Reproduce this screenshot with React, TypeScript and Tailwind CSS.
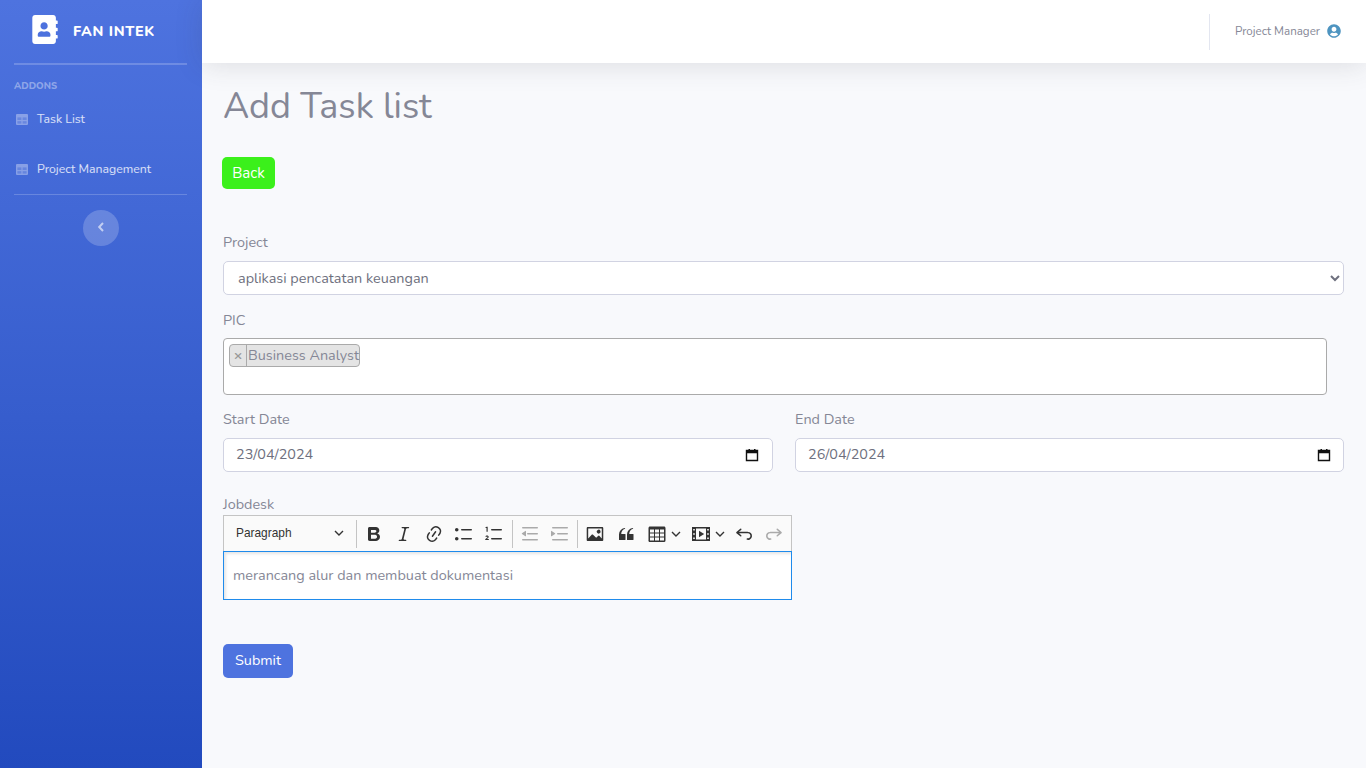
import React from "react";
import { FaAddressBook, FaUserCircle } from "react-icons/fa";

const font = { fontFamily: "Nunito, 'Noto Sans', sans-serif" };

function Ico({ d, className = "", color = "#333", flip = false }: { d: string; className?: string; color?: string; flip?: boolean }) {
  return (
    <svg viewBox="0 0 20 20" className={"h-5 w-5 shrink-0 " + className}>
      <path d={d} fill={color} fillRule="evenodd" transform={flip ? "matrix(-1 0 0 1 20 0)" : undefined} />
    </svg>
  );
}

function Chevron({ className = "" }: { className?: string }) {
  return (
    <svg viewBox="0 0 10 10" className={"h-[10px] w-[10px] shrink-0 " + className} fill="none">
      <path d="M1 3l4 4 4-4" stroke="#333" strokeWidth="1.4" />
    </svg>
  );
}

function Sep() {
  return <span className="mx-[4px] h-[28px] w-px shrink-0 bg-[#c4c4c4]" />;
}

const BOLD = "M10.187 17H5.773c-.637 0-1.092-.138-1.364-.415-.273-.277-.409-.718-.409-1.323V4.738c0-.617.14-1.062.419-1.332.279-.27.73-.406 1.354-.406h4.68c.69 0 1.288.041 1.793.124.506.083.96.242 1.36.478.341.197.644.447.906.75a3.262 3.262 0 0 1 .808 2.162c0 1.401-.722 2.426-2.167 3.075C15.05 10.175 16 11.315 16 13.01a3.756 3.756 0 0 1-2.296 3.504 6.1 6.1 0 0 1-1.517.377c-.571.073-1.238.11-2 .11zm-.217-6.217H7v4.087h3.069c1.977 0 2.965-.69 2.965-2.072 0-.707-.256-1.22-.768-1.537-.512-.319-1.277-.478-2.296-.478zM7 5.13v3.619h2.606c.729 0 1.292-.067 1.69-.2a1.6 1.6 0 0 0 .91-.765c.11-.186.165-.394.165-.625 0-.493-.18-.82-.54-.982-.36-.162-.91-.243-1.651-.243H7z";
const ITALIC = "m9.586 14.633.021.004c-.036.335.095.655.393.962.082.083.173.15.274.201h1.474a.6.6 0 1 1 0 1.2H5.304a.6.6 0 0 1 0-1.2h1.15c.474-.07.809-.182 1.005-.334.157-.122.291-.32.404-.597l2.416-9.55a1.053 1.053 0 0 0-.281-.823 1.12 1.12 0 0 0-.442-.296H8.15a.6.6 0 0 1 0-1.2h6.443a.6.6 0 1 1 0 1.2h-1.195c-.376.056-.65.155-.823.296-.215.175-.423.439-.623.79l-2.366 9.347z";
const LINK = "m11.077 15 .991-1.416a.75.75 0 1 1 1.229.86l-1.148 1.64a.748.748 0 0 1-.217.206 5.251 5.251 0 0 1-8.503-5.955.741.741 0 0 1 .12-.274l1.147-1.639a.75.75 0 1 1 1.228.86L4.933 10.7l.006.003a3.75 3.75 0 0 0 6.132 4.294l.006.004zm5.494-5.335a.748.748 0 0 1-.12.274l-1.147 1.639a.75.75 0 1 1-1.228-.86l.86-1.23a3.75 3.75 0 0 0-6.144-4.301l-.86 1.229a.75.75 0 0 1-1.229-.86l1.148-1.64a.748.748 0 0 1 .217-.206 5.251 5.251 0 0 1 8.503 5.955zm-4.563-2.532a.75.75 0 0 1 .184 1.045l-3.155 4.505a.75.75 0 1 1-1.229-.86l3.155-4.506a.75.75 0 0 1 1.045-.184z";
const BULLET = "M7 5.75c0 .414.336.75.75.75h9.5a.75.75 0 1 0 0-1.5h-9.5a.75.75 0 0 0-.75.75zm-6 0C1 4.784 1.777 4 2.75 4c.966 0 1.75.777 1.75 1.75 0 .966-.777 1.75-1.75 1.75C1.784 7.5 1 6.723 1 5.75zm6 9c0 .414.336.75.75.75h9.5a.75.75 0 1 0 0-1.5h-9.5a.75.75 0 0 0-.75.75zm-6 0c0-.966.777-1.75 1.75-1.75.966 0 1.75.777 1.75 1.75 0 .966-.777 1.75-1.75 1.75-.966 0-1.75-.777-1.75-1.75z";
const NUMBERED = "M7 5.75c0 .414.336.75.75.75h9.5a.75.75 0 1 0 0-1.5h-9.5a.75.75 0 0 0-.75.75zm0 9c0 .414.336.75.75.75h9.5a.75.75 0 1 0 0-1.5h-9.5a.75.75 0 0 0-.75.75zM2.6 2.8h1.1v5H2.500V4H1.500V3.300zM1.300 12.600c.2-.8.900-1.200 1.700-1.200 1 0 1.700.6 1.700 1.400 0 .7-.4 1.200-1.100 1.700l-.8.6h2v1H1.200v-.9l1.700-1.400c.4-.3.6-.6.6-.9 0-.3-.2-.5-.5-.5-.4 0-.6.2-.7.6z";
const INDENT = "M2 3.75c0 .414.336.75.75.75h14.500a.75.75 0 1 0 0-1.500H2.750a.75.75 0 0 0-.75.75zm5 6c0 .414.336.75.75.75h9.500a.75.75 0 1 0 0-1.500h-9.500a.75.75 0 0 0-.75.75zM2.750 16.500h14.500a.75.75 0 1 0 0-1.500H2.750a.75.75 0 1 0 0 1.500zM1.632 6.950 5.020 9.358a.4.4 0 0 1-.013.661l-3.390 2.207A.4.4 0 0 1 1 11.892V7.275a.4.4 0 0 1 .632-.326z";
const OUTDENT = "M2 3.750c0 .414.336.75.75.75h14.500a.75.75 0 1 0 0-1.500H2.750a.75.75 0 0 0-.75.75zm5 6c0 .414.336.75.75.75h9.500a.75.75 0 1 0 0-1.500h-9.500a.75.75 0 0 0-.75.75zM2.750 16.500h14.500a.75.75 0 1 0 0-1.500H2.750a.75.75 0 1 0 0 1.500zM5.370 6.950 1.980 9.358a.4.4 0 0 0 .013.661l3.390 2.207A.4.4 0 0 0 6 11.892V7.275a.4.4 0 0 0-.630-.326z";
const IMAGE = "M6.910 10.540c.26-.23.64-.21.88.03l3.360 3.140 2.230-2.060a.64.64 0 0 1 .87 0l2.520 2.970V4.500H3.200v10.120l3.710-4.080zm10.270-7.510c.6 0 1.090.47 1.090 1.050v11.840c0 .59-.49 1.060-1.090 1.060H2.790c-.6 0-1.090-.47-1.090-1.060V4.080c0-.58.49-1.050 1.100-1.050h14.380zm-5.220 5.560a1.960 1.960 0 1 1 3.400-1.960 1.960 1.960 0 0 1-3.400 1.960z";
const QUOTE = "M3 10.423a6.500 6.500 0 0 1 6.056-6.408l.038.67C6.448 5.423 5.354 7.663 5.220 10H9c.552 0 .5.432.5.986v4.511c0 .554-.448.503-1 .503h-5c-.552 0-.5-.449-.5-1.003v-4.574zm8 0a6.500 6.500 0 0 1 6.056-6.408l.038.67c-2.646.739-3.740 2.979-3.873 5.315H17c.552 0 .5.432.5.986v4.511c0 .554-.448.503-1 .503h-5c-.552 0-.5-.449-.5-1.003v-4.574z";
const TABLE = "M3 5.500v3h4v-3H3zm0 4v3h4v-3H3zm0 4v3h4v-3H3zm5 3h4v-3H8v3zm5 0h4v-3h-4v3zm4-4v-3h-4v3h4zm0-4v-3h-4v3h4zm1.500 8a1.500 1.500 0 0 1-1.500 1.500H3A1.500 1.500 0 0 1 1.500 16V4c0-.828.672-1.500 1.500-1.500h14c.828 0 1.500.672 1.500 1.500v12zM8 12.500h4v-3H8v3zM8 8.500h4v-3H8v3z";
const MEDIA = "M1 3h18v14H1zM5 4.500v11h10v-11zM2.200 5v1.600h1.600V5zM2.200 9.200v1.600h1.600V9.200zM2.200 13.400V15h1.600v-1.600zM16.200 5v1.600h1.600V5zM16.200 9.200v1.600h1.600V9.200zM16.200 13.400V15h1.600v-1.600zM8 6.800v6.400l5.200-3.200z";
const UNDO = "m5.042 9.367 2.189 1.837a.75.75 0 0 1-.965 1.149l-3.788-3.180a.747.747 0 0 1-.21-.284.75.75 0 0 1 .17-.945L6.230 4.762a.75.75 0 1 1 .964 1.150L4.863 7.866h8.917A.75.75 0 0 1 14 7.900a4 4 0 1 1-1.477 7.718l.344-1.489a2.500 2.500 0 1 0 1.094-4.780l.008-.020-.090.010-8.840-.020z";

function Toolbar() {
  return (
    <div className="flex h-[36px] items-center border border-b-0 border-[#c4c4c4] bg-[#fafafa]">
      <div className="ml-[2px] flex w-[126px] shrink-0 items-center justify-between pl-[10px] pr-[8px] text-[11.9px] text-[#333]" style={{ fontFamily: "'Liberation Sans', sans-serif" }}>
        <span className="mt-[1px]">Paragraph</span>
        <Chevron />
      </div>
      <Sep />
      <div className="flex shrink-0 items-center gap-[10px] pl-[3px] pr-[4px]">
        <Ico d={BOLD} />
        <Ico d={ITALIC} />
        <Ico d={LINK} />
        <Ico d={BULLET} />
        <Ico d={NUMBERED} />
      </div>
      <Sep />
      <div className="flex shrink-0 items-center gap-[10px] px-[3px]">
        <Ico d={OUTDENT} color="#aaa" />
        <Ico d={INDENT} color="#aaa" />
      </div>
      <Sep />
      <div className="flex shrink-0 items-center pl-[3px]">
        <Ico d={IMAGE} />
        <Ico d={QUOTE} className="ml-[11px]" />
        <Ico d={TABLE} className="ml-[11px]" />
        <Chevron className="ml-[4px]" />
        <Ico d={MEDIA} className="ml-[10px]" />
        <Chevron className="ml-[4px]" />
        <Ico d={UNDO} className="ml-[9px]" />
        <Ico d={UNDO} color="#aaa" flip className="ml-[10px]" />
      </div>
    </div>
  );
}

function GridIcon() {
  return (
    <svg viewBox="0 0 12 11" className="h-[11px] w-[12px] shrink-0">
      <path fillRule="evenodd" d="M1 0h10a1 1 0 0 1 1 1v9a1 1 0 0 1-1 1H1a1 1 0 0 1-1-1V1a1 1 0 0 1 1-1zM1.500 3.500v2.500h3.800V3.500zM6.700 3.500v2.500h3.800V3.500zM1.500 7.200v2.300h3.800V7.200zM6.700 7.200v2.300h3.800V7.200z" fill="#fff" fillOpacity="0.36" />
      <path d="M1.500 3.500h3.800v2.500H1.500zM6.700 3.500h3.800v2.500H6.700zM1.500 7.200h3.800v2.300H1.500zM6.700 7.200h3.800v2.300H6.700z" fill="#fff" fillOpacity="0.18" />
    </svg>
  );
}

function DateField({ value, pad }: { value: string; pad: string }) {
  return (
    <div className={"mt-[9px] flex h-[34px] items-center justify-between rounded-[5px] border border-[#d1d3e2] bg-white pl-[12px] text-[14.4px] text-[#6e707e] " + pad}>
      <span>{value}</span>
      <svg viewBox="0 0 14 14" className="h-[14px] w-[14px]" fill="none">
        <path d="M1.500 2.500h11v10h-11z" stroke="#111" strokeWidth="1.400" />
        <path d="M1 2.200h12v3H1zM3.500 1h1.500v2H3.500zM9 1h1.500v2H9z" fill="#111" />
      </svg>
    </div>
  );
}

export default function App() {
  return (
    <div className="flex h-screen overflow-hidden bg-[#f8f9fc] text-[#858796]" style={font}>
      <aside className="flex w-[202px] shrink-0 flex-col bg-gradient-to-b from-[#4e73df] to-[#224abe] pl-[14px] pr-[15px]">
        <div className="flex h-[63px] items-center pb-[4px] pl-[18px]">
          <FaAddressBook className="h-[29px] w-[26px] text-white" />
          <span className="ml-[15px] mt-[4px] text-[14.4px] font-extrabold tracking-[0.65px] text-white">FAN INTEK</span>
        </div>
        <div className="h-[2px] bg-white/20" />
        <div className="mt-[14px] text-[9.6px] font-extrabold leading-[13px] text-white/40">ADDONS</div>
        <div className="mt-[17px] flex h-[20px] items-center pl-[2px] text-[12.3px] text-white/80">
          <GridIcon />
          <span className="ml-[9px]">Task List</span>
        </div>
        <div className="mt-[30px] flex h-[20px] items-center pl-[2px] text-[12.3px] text-white/80">
          <GridIcon />
          <span className="ml-[9px]">Project Management</span>
        </div>
        <div className="mt-[15px] h-px bg-white/20" />
        <div className="mt-[15px] flex h-[36px] w-[36px] items-center justify-center self-center rounded-full bg-white/20">
          <svg viewBox="0 0 8 10" className="mb-[3px] h-[10px] w-[8px]" fill="none">
            <path d="M6 1L2.200 5 6 9" stroke="#fff" strokeOpacity="0.6" strokeWidth="2" />
          </svg>
        </div>
      </aside>
      <main className="flex min-w-0 flex-1 flex-col">
        <header className="flex h-[63px] shrink-0 items-center justify-end bg-white pr-[25px] shadow-[0_2px_28px_rgba(58,59,69,0.15)]">
          <div className="h-[36px] w-px bg-[#e3e6f0]" />
          <span className="ml-[25px] text-[11.6px] text-[#858796]">Project Manager</span>
          <FaUserCircle className="mb-[1px] ml-[7px] h-[14px] w-[14px] text-[#4e94c0]" />
        </header>
        <div className="pl-[20px] pr-[22px]">
          <h1 className="mt-[20px] pl-[1px] text-[36px] leading-[48px] text-[#858796]">Add Task list</h1>
          <button className="mt-[26px] flex h-[32px] w-[53px] items-center justify-center rounded-[5px] bg-[#3bf01b] text-[15px] text-white">Back</button>
          <label className="mt-[43px] block pl-[1px] text-[14.4px] leading-[20px]">Project</label>
          <div className="ml-[1px] mt-[9px]">
            <select className="h-[34px] w-full rounded-[5px] border border-[#d1d3e2] bg-white pl-[10px] text-[14.4px] text-[#6e707e]" defaultValue="a">
              <option value="a">aplikasi pencatatan keuangan</option>
            </select>
          </div>
          <label className="mt-[15px] block pl-[1px] text-[14.4px] leading-[20px]">PIC</label>
          <div className="ml-[1px] mr-[17px] mt-[8px] h-[57px] rounded-[4px] border border-[#aaa] bg-white pl-[5px] pt-[4px]">
            <div className="inline-flex h-[23px] items-stretch rounded-[4px] border border-[#aaa] bg-[#e4e4e4] text-[14.4px] leading-[20px] text-[#858796]">
              <span className="flex w-[17px] items-center justify-center border-r border-[#aaa] font-bold text-[#999]">×</span>
              <span className="pl-[1px]">Business Analyst</span>
            </div>
          </div>
          <div className="ml-[1px] mt-[14px] grid grid-cols-[550px_549px] gap-x-[22px]">
            <div>
              <label className="block text-[14.4px] leading-[20px]">Start Date</label>
              <DateField value="23/04/2024" pad="pr-[13px]" />
            </div>
            <div>
              <label className="block text-[14.4px] leading-[20px]">End Date</label>
              <DateField value="26/04/2024" pad="pr-[12px]" />
            </div>
          </div>
          <label className="mt-[22px] block pl-[1px] text-[14.4px] leading-[20px]">Jobdesk</label>
          <div className="ml-[1px] mt-[1px] w-[569px]">
            <Toolbar />
            <div className="flex h-[49px] items-center border border-[#1f8bec] bg-white pl-[9px] text-[14.4px] text-[#858796] shadow-[inset_2px_2px_3px_rgba(0,0,0,0.1)]">merancang alur dan membuat dokumentasi</div>
          </div>
          <button className="ml-[1px] mt-[44px] flex h-[34px] w-[70px] items-center justify-center rounded-[5px] bg-[#4e73df] text-[14.4px] text-white">Submit</button>
        </div>
      </main>
    </div>
  );
}
